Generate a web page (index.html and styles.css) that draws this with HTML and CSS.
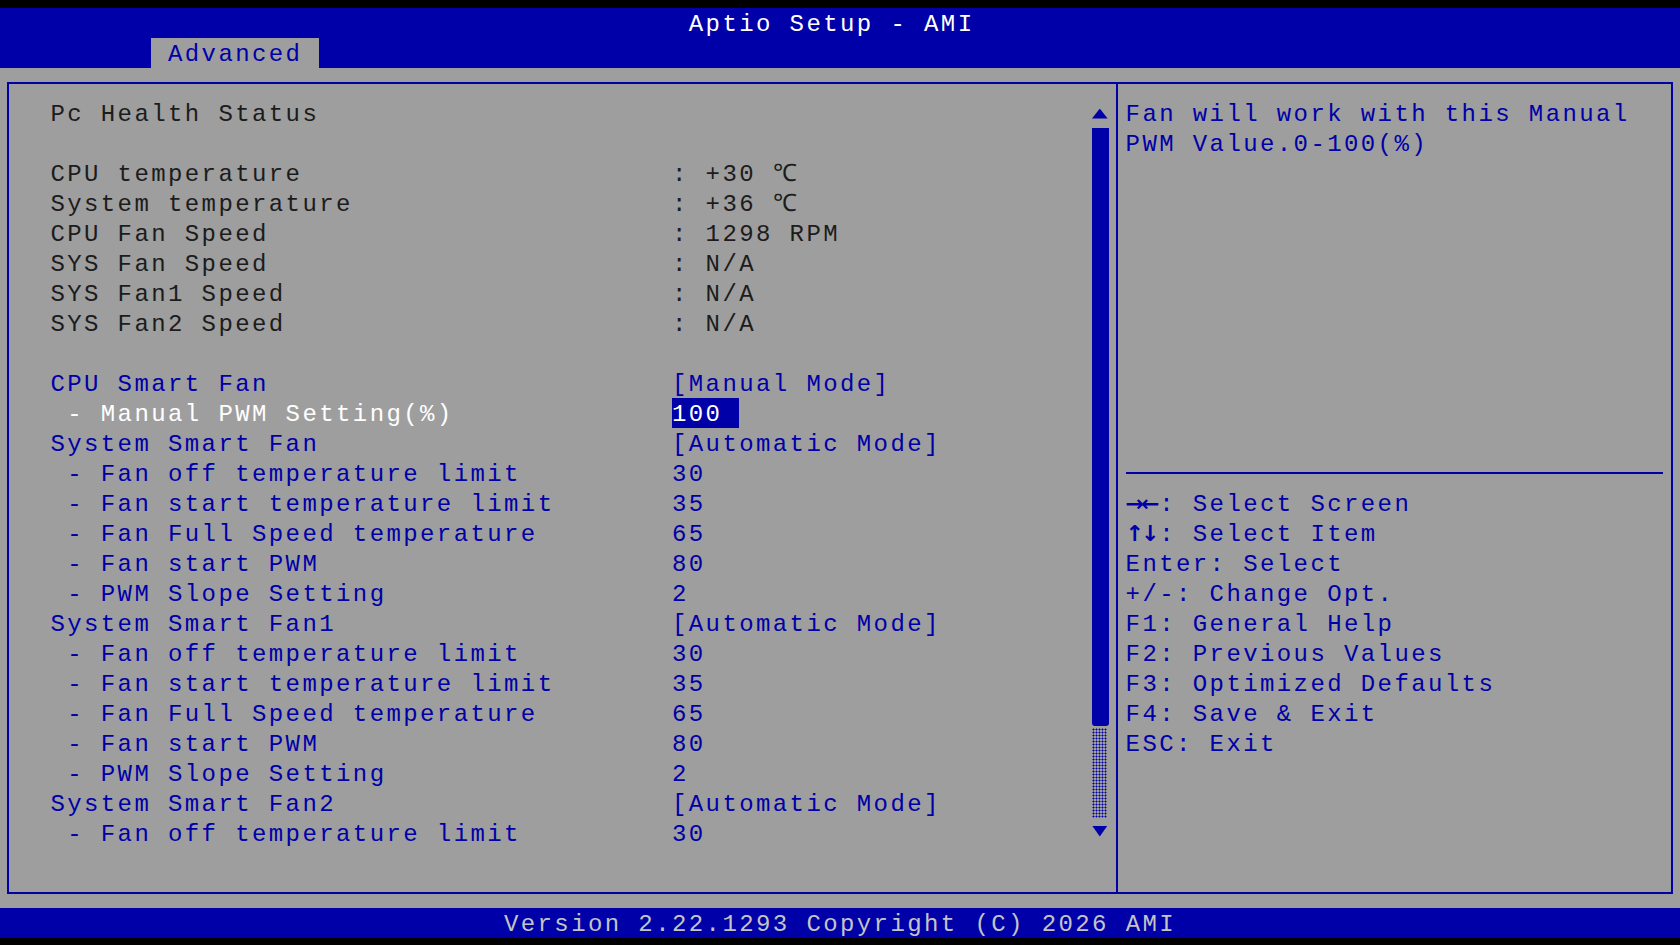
FILE: index.html
```html
<!DOCTYPE html>
<html lang="en">
<head>
    <meta charset="UTF-8">
    <title>Aptio Setup - AMI</title>
    <link rel="stylesheet" href="styles.css">
</head>
<body>
    <div class="screen">
        <header class="title-bar">
            <span class="title">Aptio Setup - AMI</span>
        </header>
        <nav class="tab-bar">
            <span class="tab">Advanced</span>
        </nav>

        <main class="body-area">
            <div class="frame">
                <section class="pane-left">
                    <div class="list">
                        <div class="row info"><span class="label">Pc Health Status</span></div>
                        <div class="row"></div>
                        <div class="row info"><span class="label">CPU temperature</span><span class="value">: +30 ℃</span></div>
                        <div class="row info"><span class="label">System temperature</span><span class="value">: +36 ℃</span></div>
                        <div class="row info"><span class="label">CPU Fan Speed</span><span class="value">: 1298 RPM</span></div>
                        <div class="row info"><span class="label">SYS Fan Speed</span><span class="value">: N/A</span></div>
                        <div class="row info"><span class="label">SYS Fan1 Speed</span><span class="value">: N/A</span></div>
                        <div class="row info"><span class="label">SYS Fan2 Speed</span><span class="value">: N/A</span></div>
                        <div class="row"></div>
                        <div class="row"><span class="label">CPU Smart Fan</span><span class="value">[Manual Mode]</span></div>
                        <div class="row active"><span class="label"> - Manual PWM Setting(%)</span><span class="value selected">100</span></div>
                        <div class="row"><span class="label">System Smart Fan</span><span class="value">[Automatic Mode]</span></div>
                        <div class="row"><span class="label"> - Fan off temperature limit</span><span class="value">30</span></div>
                        <div class="row"><span class="label"> - Fan start temperature limit</span><span class="value">35</span></div>
                        <div class="row"><span class="label"> - Fan Full Speed temperature</span><span class="value">65</span></div>
                        <div class="row"><span class="label"> - Fan start PWM</span><span class="value">80</span></div>
                        <div class="row"><span class="label"> - PWM Slope Setting</span><span class="value">2</span></div>
                        <div class="row"><span class="label">System Smart Fan1</span><span class="value">[Automatic Mode]</span></div>
                        <div class="row"><span class="label"> - Fan off temperature limit</span><span class="value">30</span></div>
                        <div class="row"><span class="label"> - Fan start temperature limit</span><span class="value">35</span></div>
                        <div class="row"><span class="label"> - Fan Full Speed temperature</span><span class="value">65</span></div>
                        <div class="row"><span class="label"> - Fan start PWM</span><span class="value">80</span></div>
                        <div class="row"><span class="label"> - PWM Slope Setting</span><span class="value">2</span></div>
                        <div class="row"><span class="label">System Smart Fan2</span><span class="value">[Automatic Mode]</span></div>
                        <div class="row"><span class="label"> - Fan off temperature limit</span><span class="value">30</span></div>
                    </div>

                    <div class="scrollbar">
                        <span class="arrow-cell"><span class="arrow up"></span></span>
                        <span class="thumb"></span>
                        <span class="track"></span>
                        <span class="arrow-cell"><span class="arrow down"></span></span>
                    </div>
                </section>

                <aside class="pane-right">
                    <div class="help">
                        <p>Fan will work with this Manual</p>
                        <p>PWM Value.0-100(%)</p>
                    </div>
                    <div class="rule"></div>
                    <div class="keys">
                        <p><b>→←</b>: Select Screen</p>
                        <p><b>↑↓</b>: Select Item</p>
                        <p>Enter: Select</p>
                        <p>+/-: Change Opt.</p>
                        <p>F1: General Help</p>
                        <p>F2: Previous Values</p>
                        <p>F3: Optimized Defaults</p>
                        <p>F4: Save &amp; Exit</p>
                        <p>ESC: Exit</p>
                    </div>
                </aside>
            </div>
        </main>

        <footer class="status-bar">
            <span class="version">Version 2.22.1293 Copyright (C) 2026 AMI</span>
        </footer>
    </div>
</body>
</html>
```

FILE: styles.css
```css
:root {
    --blue: #0000a8;
    --gray: #9e9e9e;
    --ink: #1c1c1c;
    --white: #ffffff;
    --footer-text: #c4c4c4;
}

* {
    margin: 0;
    padding: 0;
    box-sizing: border-box;
}

body {
    width: 1680px;
    height: 945px;
    overflow: hidden;
    background: #000;
    font-family: "Liberation Mono", "DejaVu Sans Mono", monospace;
    font-size: 24px;
    letter-spacing: 2.4px;
}

.screen {
    height: 945px;
    padding: 7.5px 0;
    display: flex;
    flex-direction: column;
}

/* every text cell row is 30px; glyphs sit low in the cell */
.title,
.tab,
.version,
.row > span,
.help p,
.keys p {
    display: block;
    height: 30px;
    padding-top: 4px;
    line-height: 26px;
    white-space: pre;
}

.title-bar,
.tab-bar,
.status-bar {
    height: 30px;
    flex-shrink: 0;
    background: var(--blue);
    display: flex;
}

.title {
    padding-left: 688.8px;
    color: var(--white);
}

.tab {
    margin-left: 151.2px;
    width: 168px;
    padding-left: 16.8px;
    background: var(--gray);
    color: var(--blue);
}

.status-bar {
    justify-content: center;
}

.version {
    color: var(--footer-text);
}

.body-area {
    height: 840px;
    flex-shrink: 0;
    background: var(--gray);
    padding: 14px 7.4px;
}

.frame {
    height: 812px;
    border: 2px solid var(--blue);
    display: flex;
}

.pane-left {
    width: 1106.8px;
    display: flex;
    padding: 14px 7.4px 0 0;
}

.list {
    flex: 1;
    padding-left: 41px;
}

.row {
    height: 30px;
    display: flex;
    color: var(--blue);
}

.row .label {
    width: 621.6px;
}

.row.info {
    color: var(--ink);
}

.row.active .label {
    color: var(--white);
}

.value.selected {
    width: 67.2px;
    background: var(--blue);
    color: var(--white);
}

.scrollbar {
    width: 16.8px;
    height: 750px;
    display: flex;
    flex-direction: column;
}

.arrow-cell {
    height: 30px;
    display: flex;
    padding-top: 11px;
}

.arrow-cell:last-child {
    padding-top: 8px;
}

.arrow {
    width: 15.6px;
    height: 10px;
    background: var(--blue);
}

.arrow.up {
    clip-path: polygon(50% 0, 100% 100%, 0 100%);
}

.arrow.down {
    height: 11px;
    clip-path: polygon(0 0, 100% 0, 50% 100%);
}

.thumb {
    height: 598px;
    background: var(--blue);
    border-radius: 0 0 3px 3px;
}

.track {
    height: 90px;
    margin: 2px 1.6px 0 0;
    background-image: radial-gradient(circle, var(--blue) 0.8px, transparent 1.2px);
    background-size: 3px 3px;
}

.pane-right {
    flex: 1;
    border-left: 2px solid var(--blue);
    padding: 14px 7.4px 0;
    color: var(--blue);
}

.help {
    height: 360px;
}

.rule {
    height: 2px;
    margin: 14px 0;
    background: var(--blue);
}

.keys b {
    display: inline-block;
    width: 33.6px;
    font-family: "DejaVu Sans", sans-serif;
    font-size: 22px;
    font-weight: 700;
    letter-spacing: -3px;
    line-height: 22px;
}
```
